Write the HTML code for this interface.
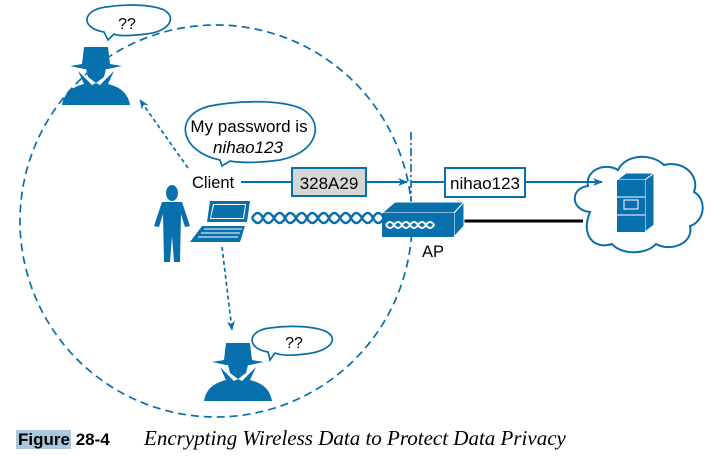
<!DOCTYPE html>
<html><head><style>
body{margin:0;width:718px;height:456px;background:#fff;overflow:hidden;position:relative;font-family:"Liberation Sans",sans-serif}
svg{position:absolute;left:0;top:0}
.cap{position:absolute;top:428px;left:16px;font-size:17px;height:23px;line-height:23px;white-space:nowrap}
.fig{background:#a9c8de;font-weight:bold;padding:0 1px 0 2px}
.num{font-weight:bold}
.t{font-family:"Liberation Serif",serif;font-style:italic;font-size:21px;position:absolute;left:128px;top:-1px}
</style></head><body>
<svg width="718" height="456" viewBox="0 0 718 456">
<defs>
<marker id="ar" markerWidth="10" markerHeight="8" refX="9" refY="4" orient="auto" markerUnits="userSpaceOnUse"><path d="M0,0 L10,4 L0,8 L3,4z" fill="#0a6ea8"/></marker>
<g id="spy" fill="#0870ad">
<path d="M22,0 L46,0 L48,17 L60,19 L46,22 L22,22 L8,19 L20,17z"/>
<path d="M24,22 L44,22 L42,30 L34,36 L26,30z"/>
<path d="M0,58 C2,46 10,40 22,37 L16,24 L30,38 L34,36 L38,38 L52,24 L46,37 C58,40 66,46 68,58z"/>
</g>
</defs>
<g fill="none" stroke="#0a6ea8" stroke-width="1.7">
<circle cx="216" cy="221" r="196" stroke-dasharray="8,5"/>
<line x1="411" y1="132" x2="411" y2="212" stroke-dasharray="8,3,2,3"/>
<path d="M188,168 L140,100" stroke-dasharray="4,3" marker-end="url(#ar)"/>
<path d="M222,247 L232,330" stroke-dasharray="4,3" marker-end="url(#ar)"/>
<line x1="241" y1="182" x2="292" y2="182" stroke-width="2"/>
<line x1="366" y1="182" x2="407" y2="182" stroke-width="2" marker-end="url(#ar)"/>
<line x1="411" y1="182" x2="445" y2="182" stroke-width="2"/>
<line x1="525" y1="182" x2="602" y2="182" stroke-width="2" marker-end="url(#ar)"/>
<path d="M104,32 C80,28 82,10 106,7 C125,4 150,4 164,10 C178,18 168,32 146,34 C130,36 118,36 114,34 L108,40z"/>
<path d="M268,352 C245,348 248,330 270,328 C290,325 315,326 327,332 C340,340 328,352 305,354 C290,356 280,355 275,353 L270,360z"/>
<path d="M220,160 C180,152 172,115 210,106 C240,100 280,100 300,108 C325,120 320,152 280,160 C260,163 240,163 230,161 L222,166z"/>
<path d="M252,218 q6,-10 11,0 t11,0 t11,0 t11,0 t11,0 t11,0 t11,0 t11,0 t11,0 t11,0 t11,0 t11,0 M252,218 q6,10 11,0 t11,0 t11,0 t11,0 t11,0 t11,0 t11,0 t11,0 t11,0 t11,0 t11,0 t11,0" stroke-width="2.5"/>
<path d="M590,212 C570,210 570,188 588,186 C585,170 605,162 618,170 C625,155 650,152 664,165 C684,160 700,176 694,192 C708,200 704,222 690,226 C694,244 670,252 656,244 C645,256 620,254 612,244 C595,250 580,236 590,212z" stroke-width="2"/>
</g>
<line x1="462" y1="221" x2="583" y2="221" stroke="#000" stroke-width="3"/>
<rect x="292" y="168" width="74" height="28" fill="#d6d6d6" stroke="#0a6ea8" stroke-width="2"/>
<rect x="445" y="168" width="80" height="29" fill="#fff" stroke="#0a6ea8" stroke-width="2"/>
<use href="#spy" x="62" y="47"/>
<use href="#spy" x="204" y="343"/>
<g fill="#0870ad">
<ellipse cx="172" cy="193" rx="6" ry="8"/>
<path d="M162,202 L182,202 L190,226 L185,227 L181,214 L180,262 L174,262 L172,236 L170,262 L164,262 L163,214 L159,227 L154,226z"/>
<path d="M210,201 L250,201 L247,222 L207,222z"/>
<path d="M202,226 L245,226 L240,242 L190,242z"/>
</g>
<path d="M213,204 L246,204 L244,219 L210,219z" fill="#fff"/><path d="M214,205 L245,205 L243,218 L211,218z" fill="#0870ad"/>
<path d="M204,229 L242,229 M201,233 L240,233 M198,237 L238,237" stroke="#fff" stroke-width="1"/>
<path d="M382,213 L395,202 L464,202 L454,213z" fill="#0870ad" stroke="#fff" stroke-width="1"/>
<path d="M454,213 L464,202 L464,226 L454,237z" fill="#0870ad" stroke="#fff" stroke-width="1"/>
<rect x="382" y="213" width="72" height="24" fill="#0870ad"/>
<path d="M386,225 q4,-6 8,0 q4,-6 8,0 q4,-6 8,0 q4,-6 8,0 q4,-6 8,0 q4,-6 8,0 q-4,6 -8,0 q-4,6 -8,0 q-4,6 -8,0 q-4,6 -8,0 q-4,6 -8,0 q-4,6 -8,0" fill="none" stroke="#fff" stroke-width="2"/>
<path d="M617,180 L626,173 L654,173 L645,180z" fill="#0870ad" stroke="#fff"/>
<path d="M645,180 L654,173 L654,225 L645,232z" fill="#0870ad" stroke="#fff"/>
<rect x="617" y="180" width="28" height="52" fill="#0870ad"/>
<line x1="617" y1="197" x2="645" y2="197" stroke="#fff"/><line x1="617" y1="215" x2="645" y2="215" stroke="#fff"/>
<rect x="624" y="200" width="14" height="9" fill="none" stroke="#fff"/>
<g font-family="Liberation Sans,sans-serif" fill="#000">
<text x="127" y="29" font-size="16" text-anchor="middle">??</text>
<text x="294" y="348" font-size="16" text-anchor="middle">??</text>
<text x="249" y="132" font-size="17" text-anchor="middle">My password is</text>
<text x="248" y="153" font-size="17" text-anchor="middle" font-style="italic">nihao123</text>
<text x="192" y="188" font-size="16.5">Client</text>
<text x="329" y="189" font-size="17" text-anchor="middle">328A29</text>
<text x="485" y="189" font-size="17" text-anchor="middle">nihao123</text>
<text x="433" y="257" font-size="16.5" text-anchor="middle">AP</text>
</g>
</svg>
<div class="cap"><span class="fig">Figure</span> <span class="num">28-4</span><span class="t">Encrypting Wireless Data to Protect Data Privacy</span></div>
</body></html>
